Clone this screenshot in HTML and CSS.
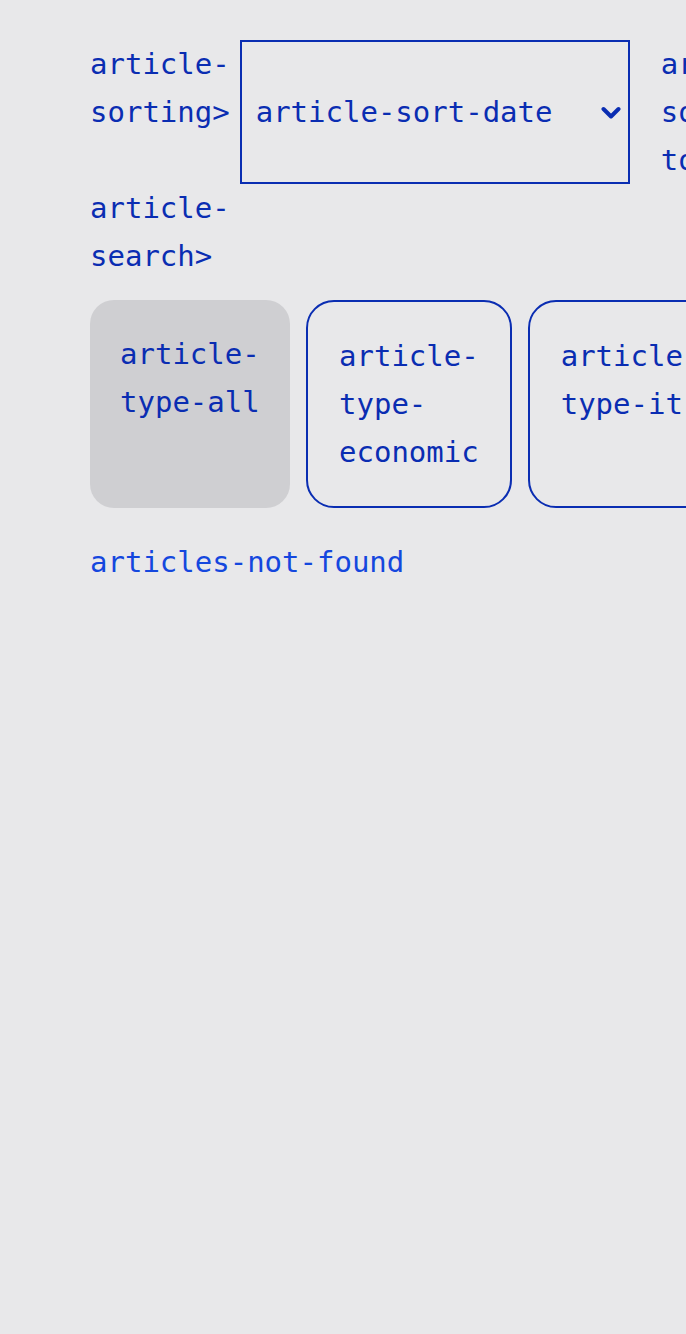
FILE: index.html
```html
<!DOCTYPE html>
<html lang="en">
<head>
<meta charset="utf-8">
<title>Articles</title>
<link rel="stylesheet" href="styles.css">
</head>
<body>
<main class="page">
  <div class="sort-row">
    <label class="label">article-sorting&gt;</label>
    <div class="select-wrap">
      <select class="select">
        <option>article-sort-date</option>
      </select>
      <svg class="chevron" width="20" height="14" viewBox="0 0 20 14" aria-hidden="true">
        <path d="M2.5 3 L10 10.5 L17.5 3" fill="none" stroke="#0a2db2" stroke-width="4" stroke-linecap="round" stroke-linejoin="round"/>
      </svg>
    </div>
    <span class="label toggle">article-sort-toggle&gt;</span>
  </div>
  <div class="search-row">
    <label class="label">article-search&gt;</label>
  </div>
  <div class="types">
    <button class="type active">article-type-all</button>
    <button class="type">article-type-economic</button>
    <button class="type">article-type-it</button>
  </div>
  <p class="empty">articles-not-found</p>
</main>
</body>
</html>
```
FILE: styles.css
```css
html, body {
  margin: 0;
  padding: 0;
  background: #e8e8ea;
  overflow-x: hidden;
}
.page {
  padding: 40px 0 0 90px;
  font-family: "DejaVu Sans Mono", "Liberation Mono", monospace;
  font-size: 29px;
  line-height: 48px;
  color: #0a2db2;
  width: 900px;
}
.sort-row {
  display: flex;
  align-items: flex-start;
}
.label {
  width: min-content;
  word-break: normal;
}
.select-wrap {
  position: relative;
  margin-left: 10px;
  width: 390px;
  height: 144px;
  flex: none;
}
.select {
  appearance: none;
  -webkit-appearance: none;
  box-sizing: border-box;
  width: 100%;
  height: 100%;
  margin: 0;
  border: 2px solid #0a2db2;
  border-radius: 0;
  background: transparent;
  font: inherit;
  color: inherit;
  padding: 0 50px 0 14px;
}
.chevron {
  position: absolute;
  right: 9px;
  top: 66px;
  pointer-events: none;
}
.toggle {
  margin-left: 31px;
}
.search-row {
  display: flex;
}
.types {
  display: flex;
  gap: 16px;
  margin-top: 20px;
  align-items: stretch;
}
.type {
  font: inherit;
  color: inherit;
  text-align: left;
  background: transparent;
  border: 2px solid #0a2db2;
  border-radius: 28px;
  padding: 30px 31px;
  width: min-content;
  flex: none;
  display: flex;
  align-items: flex-start;
}
.type.active {
  box-sizing: border-box;
  width: 200px;
  background: #cfcfd2;
  border: none;
  border-radius: 24px;
  padding: 30px;
}
.empty {
  margin: 30px 0 0;
  color: #1447de;
}
```
